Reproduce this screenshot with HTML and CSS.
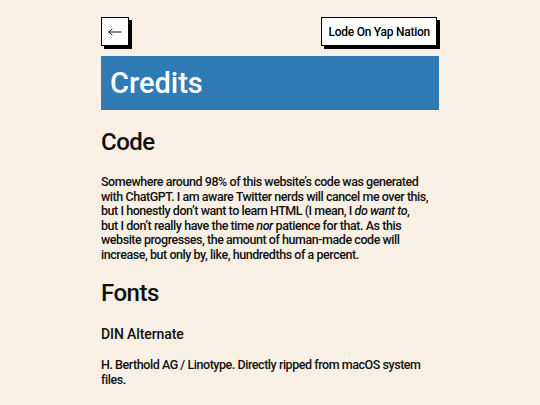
FILE: index.html
```html
<!DOCTYPE html>
<html>
<head>
<meta charset="utf-8">
<link rel="stylesheet" href="styles.css">
</head>
<body>
<div class="page">
  <nav class="nav">
    <a class="btn back" aria-label="Back"><svg class="arrow" width="14" height="8" viewBox="0 0 14 8"><path d="M0.8 4 H13.5 M4.3 0.8 L0.8 4 L4.3 7.2" fill="none" stroke="#111" stroke-width="1"/></svg></a>
    <a class="btn home">Lode On Yap Nation</a>
  </nav>
  <h1 class="banner">Credits</h1>
  <h2 class="section">Code</h2>
  <p class="text">Somewhere around 98% of this website’s code was generated<br>with ChatGPT. I am aware Twitter nerds will cancel me over this,<br>but I honestly don’t want to learn HTML (I mean, I <em>do want to</em>,<br>but I don’t really have the time <em>nor</em> patience for that. As this<br>website progresses, the amount of human-made code will<br>increase, but only by, like, hundredths of a percent.</p>
  <h2 class="section">Fonts</h2>
  <h3 class="sub">DIN Alternate</h3>
  <p class="text credit">H. Berthold AG / Linotype. Directly ripped from macOS system<br>files.</p>
</div>
</body>
</html>
```
FILE: styles.css
```css
html, body {
  margin: 0;
  padding: 0;
  background: #f8f0e4;
}
body {
  font-family: Roboto, "Liberation Sans", sans-serif;
  color: #111;
}
.page {
  width: 338px;
  margin: 0 auto;
  padding-top: 17px;
}
.nav {
  display: flex;
  justify-content: space-between;
  align-items: flex-start;
}
.btn {
  display: flex;
  align-items: center;
  justify-content: center;
  height: 27px;
  background: #fff;
  border: 1px solid #000;
  box-shadow: 3px 3px 0 #000;
  font-size: 12px;
  font-weight: 500;
  letter-spacing: -0.25px;
  color: #000;
}
.back {
  width: 26px;
}
.arrow {
  display: block;
}
.home {
  padding: 0 6px;
  margin-right: 2px;
}
.banner {
  margin: 10px 0 0;
  height: 54px;
  background: #2e7bb5;
  color: #fff;
  font-size: 29px;
  font-weight: 500;
  padding: 0 9px;
  display: flex;
  align-items: center;
  box-sizing: border-box;
}
.section {
  margin: 17px 0 0;
  font-size: 24px;
  line-height: 29px;
  font-weight: 500;
  letter-spacing: -0.5px;
}
.section:first-of-type {
  margin-top: 18px;
}
.text {
  margin: 18px 0 0;
  font-size: 12.5px;
  line-height: 14.5px;
  font-weight: 500;
  letter-spacing: -0.45px;
}
.text em {
  font-style: italic;
}
.sub {
  margin: 18px 0 0;
  font-size: 14px;
  font-weight: 500;
  letter-spacing: -0.1px;
}
.credit {
  margin-top: 16px;
}
```
